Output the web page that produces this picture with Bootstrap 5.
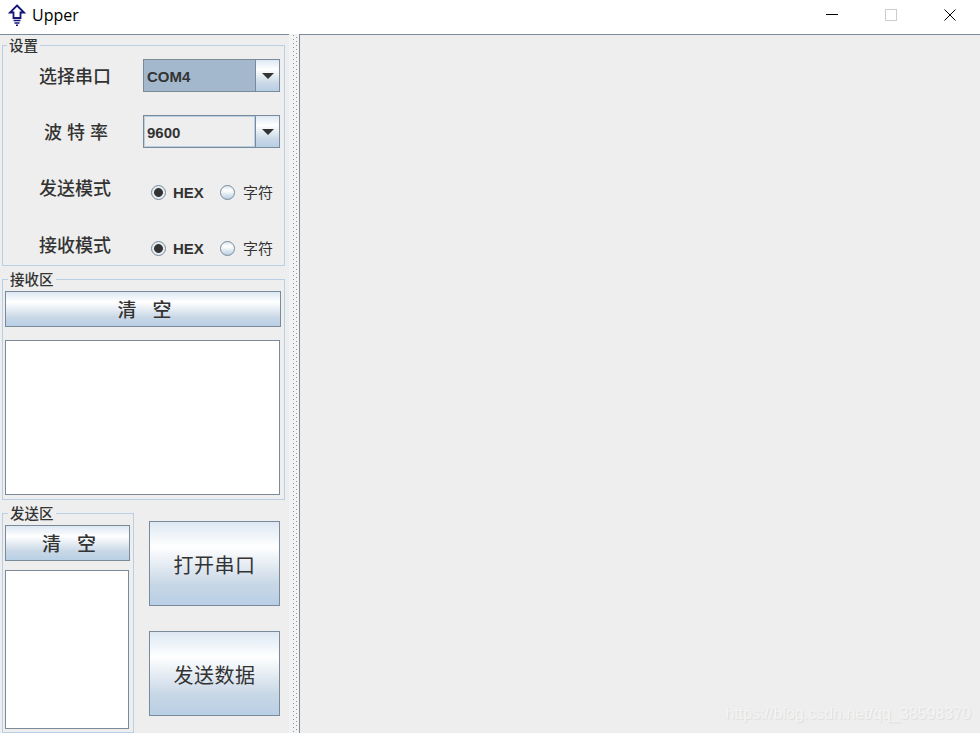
<!DOCTYPE html>
<html lang="zh">

<head>
    <meta charset="UTF-8">
    <meta name="viewport" content="width=device-width, initial-scale=1.0">
    <title>Upper</title>

    <link href="https://cdn.jsdelivr.net/npm/bootstrap@5.3.0/dist/css/bootstrap.min.css" rel="stylesheet">

    <style>
        html, body {
            height: 733px;
            overflow: hidden;
        }

        body {
            background-color: #eeeeee;
            color: #333333;
            font-family: "Liberation Sans", "Noto Sans CJK SC", sans-serif;
        }

        .title-bar {
            height: 35px;
            background-color: #ffffff;
            border-bottom: 1px solid #7a8a99;
            padding: 0 1px 4px 8px;
        }

        .title-text {
            font-family: "Open Sans", "Noto Sans", sans-serif;
            font-size: 16px;
            color: #000000;
            margin-left: 6px;
        }

        .win-btn {
            width: 59px;
            height: 30px;
        }

        .main-area {
            height: 698px;
        }

        .left-pane {
            width: 289px;
            padding: 2px 0 0 2px;
        }

        .split-bar {
            width: 11px;
            margin-top: -1px;
            border-right: 1px solid #7a8a99;
            background-image: radial-gradient(circle at 0.5px 0.5px, #8a97a5 0.7px, transparent 0.8px), radial-gradient(circle at 0.5px 0.5px, #8a97a5 0.7px, transparent 0.8px);
            background-size: 3px 4px, 3px 4px;
            background-position: 4px 1px, 7px 3px;
            background-repeat: repeat-y, repeat-y;
            background-color: #f3f3f3;
        }

        .group-box {
            border: 1px solid #b8cfe5;
            margin: 0;
            min-width: 0;
        }

        .group-box legend {
            float: none;
            width: auto;
            font-size: 14.5px;
            font-weight: 500;
            line-height: 15px;
            margin: 0 0 0 4px;
            padding: 2px 2px 0 2px;
            color: #333333;
        }

        .box-settings {
            width: 283px;
            height: 229px;
        }

        .box-receive {
            width: 283px;
            height: 229px;
            margin-top: 5px;
            padding: 3px 3px 0 2px;
        }

        .box-send {
            width: 132px;
            height: 228px;
            padding: 3px 3px 0 2px;
        }

        .box-receive legend,
        .box-send legend {
            margin-left: 3px;
        }

        .send-row {
            margin-top: 5px;
        }

        .setting-row {
            height: 24px;
            margin-bottom: 32px;
        }

        .setting-row.row-wide {
            margin-bottom: 33px;
        }

        .rows-wrap {
            padding-top: 10px;
        }

        .row-label {
            width: 140px;
            padding: 2px 0 0 36px;
            font-size: 18px;
            font-weight: 500;
            line-height: 24px;
        }

        .label-spaced {
            padding-left: 41px;
        }

        .combo {
            width: 137px;
            height: 33px;
            margin-top: -1px;
            border: 1px solid #7a8a99;
            background-color: #eeeeee;
            flex-shrink: 0;
        }

        .combo-value {
            flex: 1;
            height: 31px;
            line-height: 31px;
            padding-left: 2px;
            font-size: 15px;
            font-weight: 700;
            border: 1px solid #b8cfe5;
        }

        .combo-value.is-selected {
            background-color: #a3b8cc;
            border-color: #a3b8cc;
        }

        .combo-arrow {
            width: 24px;
            border-left: 1px solid #7a8a99;
            background: linear-gradient(#dde8f3, #ffffff 30%, #c8d7e6 75%, #b8cfe5);
        }

        .combo-arrow::after {
            content: "";
            border-left: 6px solid transparent;
            border-right: 6px solid transparent;
            border-top: 6px solid #333333;
        }

        .radio-wrap {
            padding: 8px 0 0 8px;
        }

        .radio-wrap.radio-last {
            padding-top: 6px;
        }

        .java-radio {
            appearance: none;
            width: 15px;
            height: 15px;
            margin: 0;
            border: 1px solid #7a8a99;
            border-radius: 50%;
            background: linear-gradient(#dde8f3, #ffffff 35%, #b8cfe5);
            flex-shrink: 0;
        }

        .java-radio:checked {
            background: radial-gradient(circle, #333333 0, #333333 4px, #e3ebf3 4.8px);
        }

        .radio-hex {
            width: 47px;
            margin-left: 7px;
            padding-top: 2px;
            font-size: 15px;
            font-weight: 700;
        }

        .radio-char {
            margin-left: 8px;
            padding-top: 2px;
            font-size: 15px;
        }

        .java-btn {
            display: block;
            width: 100%;
            padding: 0;
            border: 1px solid #7a8a99;
            border-radius: 0;
            color: #333333;
            background: linear-gradient(#dde8f3, #ffffff 30%, #c8d7e6 75%, #b8cfe5);
            font-family: "Noto Sans CJK SC", sans-serif;
            font-weight: 400;
        }

        .btn-wide {
            height: 36px;
            padding-left: 3px;
            font-size: 19px;
            font-weight: 500;
            line-height: 34px;
            word-spacing: 1px;
            white-space: pre;
        }

        .btn-side {
            width: 131px;
            height: 85px;
            padding-top: 3px;
            font-size: 20px;
            letter-spacing: 0.5px;
        }

        .area-box {
            display: block;
            border: 1px solid #7a8a99;
            border-radius: 0;
            background-color: #ffffff;
            padding: 0;
            resize: none;
        }

        .area-receive {
            width: 275px;
            height: 155px;
            margin-top: 13px;
        }

        .area-send {
            width: 124px;
            height: 159px;
            margin-top: 9px;
        }

        .side-buttons {
            padding: 16px 0 0 15px;
            gap: 25px;
        }

        .water-mark {
            position: absolute;
            right: 9px;
            bottom: 9px;
            font-size: 16px;
            line-height: 20px;
            color: #f4f4f4;
            text-shadow: 1px 1px 1px #dcdcdc;
        }
    </style>
</head>

<body>
    <!-- Barra de titulo -->
    <header class="title-bar d-flex align-items-center">
        <svg width="18" height="22" viewBox="0 0 18 22">
            <path d="M9 1.5 L16 8.5 L12.5 8.5 L12.5 14 L5.5 14 L5.5 8.5 L2 8.5 Z" fill="#ffffff" stroke="#14147a" stroke-width="1.8" stroke-linejoin="miter" />
            <path d="M5.5 16.5 H12.5 M6.5 19 H11.5 M8 21.2 H10" stroke="#14147a" stroke-width="1.4" fill="none" />
        </svg>
        <span class="title-text">Upper</span>
        <div class="ms-auto d-flex">
            <div class="win-btn d-flex align-items-center justify-content-center">
                <svg width="12" height="12" viewBox="0 0 12 12"><path d="M0 5.5 H12" stroke="#000000" stroke-width="1" /></svg>
            </div>
            <div class="win-btn d-flex align-items-center justify-content-center">
                <svg width="12" height="12" viewBox="0 0 12 12"><rect x="0.5" y="0.5" width="11" height="11" fill="none" stroke="#cccccc" /></svg>
            </div>
            <div class="win-btn d-flex align-items-center justify-content-center">
                <svg width="12" height="12" viewBox="0 0 12 12"><path d="M0.5 0.5 L11.5 11.5 M11.5 0.5 L0.5 11.5" stroke="#000000" stroke-width="1" /></svg>
            </div>
        </div>
    </header>

    <div class="main-area d-flex">
        <div class="left-pane">
            <!-- Ajustes -->
            <fieldset class="group-box box-settings">
                <legend>设置</legend>
                <div class="rows-wrap">
                    <div class="setting-row d-flex align-items-center">
                        <div class="row-label">选择串口</div>
                        <div class="combo d-flex">
                            <div class="combo-value is-selected">COM4</div>
                            <div class="combo-arrow d-flex align-items-center justify-content-center"></div>
                        </div>
                    </div>
                    <div class="setting-row d-flex align-items-center">
                        <div class="row-label label-spaced">波 特 率</div>
                        <div class="combo d-flex">
                            <div class="combo-value">9600</div>
                            <div class="combo-arrow d-flex align-items-center justify-content-center"></div>
                        </div>
                    </div>
                    <div class="setting-row row-wide d-flex align-items-center">
                        <div class="row-label">发送模式</div>
                        <div class="radio-wrap d-flex align-items-center">
                            <input class="java-radio" type="radio" name="envio" checked>
                            <span class="radio-hex">HEX</span>
                            <input class="java-radio" type="radio" name="envio">
                            <span class="radio-char">字符</span>
                        </div>
                    </div>
                    <div class="setting-row d-flex align-items-center">
                        <div class="row-label">接收模式</div>
                        <div class="radio-wrap radio-last d-flex align-items-center">
                            <input class="java-radio" type="radio" name="recibo" checked>
                            <span class="radio-hex">HEX</span>
                            <input class="java-radio" type="radio" name="recibo">
                            <span class="radio-char">字符</span>
                        </div>
                    </div>
                </div>
            </fieldset>

            <!-- Zona de recepcion -->
            <fieldset class="group-box box-receive">
                <legend>接收区</legend>
                <button type="button" class="btn java-btn btn-wide">清   空</button>
                <textarea class="area-box area-receive"></textarea>
            </fieldset>

            <!-- Zona de envio -->
            <div class="send-row d-flex">
                <fieldset class="group-box box-send">
                    <legend>发送区</legend>
                    <button type="button" class="btn java-btn btn-wide">清   空</button>
                    <textarea class="area-box area-send"></textarea>
                </fieldset>
                <div class="side-buttons d-flex flex-column">
                    <button type="button" class="btn java-btn btn-side">打开串口</button>
                    <button type="button" class="btn java-btn btn-side">发送数据</button>
                </div>
            </div>
        </div>

        <div class="split-bar"></div>
        <div class="flex-grow-1"></div>
    </div>

    <div class="water-mark">https://blog.csdn.net/qq_38598370</div>

    <script src="https://cdn.jsdelivr.net/npm/bootstrap@5.3.0/dist/js/bootstrap.bundle.min.js"></script>
</body>

</html>
